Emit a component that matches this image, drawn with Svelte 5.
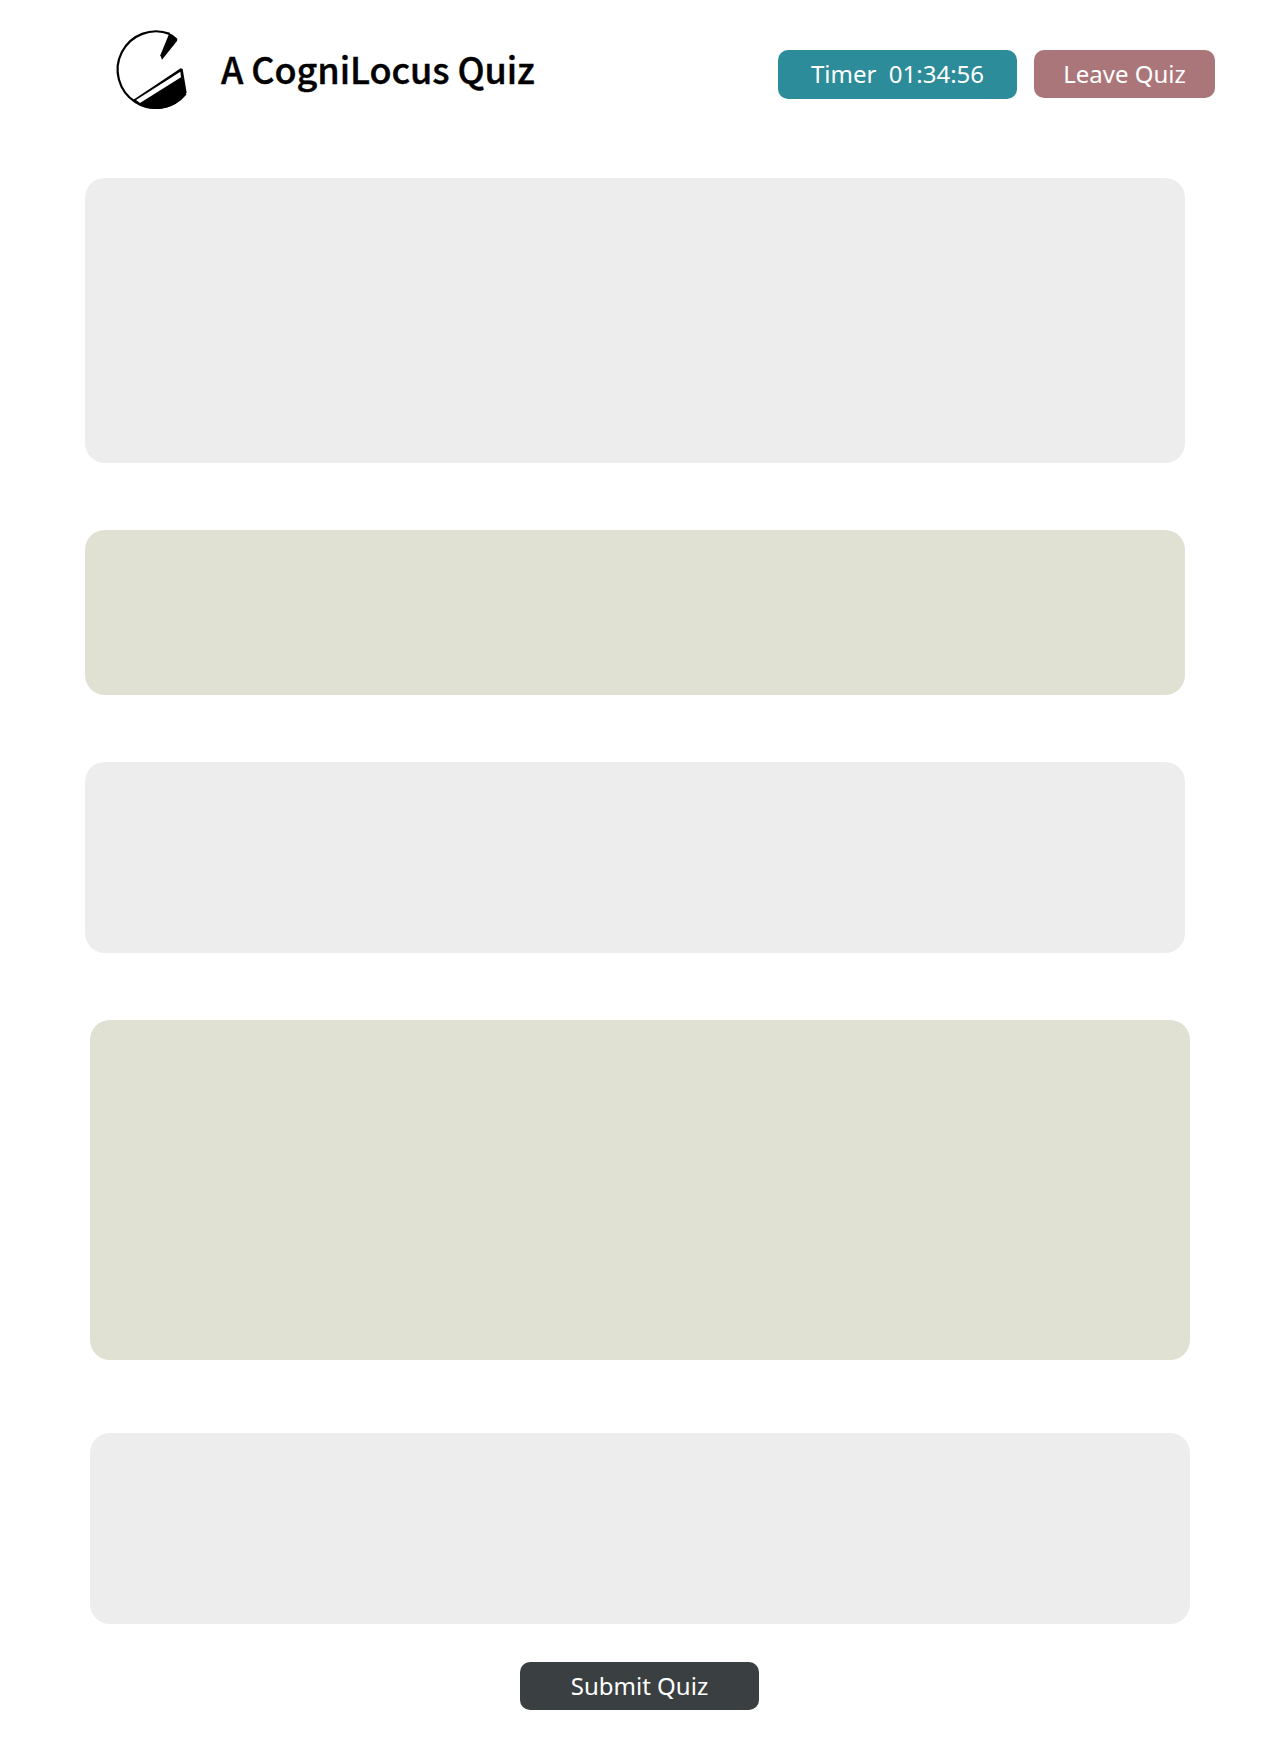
<script>
  const panels = [
    { tone: 'gray', size: 'intro' },
    { tone: 'olive', size: 'short' },
    { tone: 'gray', size: 'medium' },
    { tone: 'olive', size: 'tall', shifted: true },
    { tone: 'gray', size: 'medium', shifted: true }
  ];
</script>

<div class="page">
  <header>
    <div class="brand">
      <svg class="logo" viewBox="0 0 330 300" aria-label="CogniLocus">
        <path d="M209 41.600A115 115 0 1 0 257 221.600" fill="none" stroke="#000" stroke-width="6.500" />
        <path d="M208 40Q222 45 232 56L231 63L186 119L181 106Z" />
        <path d="M242 145L248 147L260 218Q225 267 168 267Q130 266 99 240ZM241 155L108 240L120 249L243 172Z" fill-rule="evenodd" />
      </svg>
      <h1>A CogniLocus Quiz</h1>
    </div>
    <div class="actions">
      <div class="button timer"><span>Timer&nbsp; 01:34:56</span></div>
      <button class="button leave"><span>Leave Quiz</span></button>
    </div>
  </header>
  <main>
    {#each panels as panel}
      <section class="panel {panel.tone} {panel.size}" class:shifted={panel.shifted}></section>
    {/each}
  </main>
  <footer>
    <button class="button submit"><span>Submit Quiz</span></button>
  </footer>
</div>

<style>
  :global(body) {
    margin: 0;
    background: #fff;
  }
  .page {
    width: 1280px;
    height: 1750px;
    box-sizing: border-box;
    overflow: hidden;
    font-family: "Noto Sans", sans-serif;
  }
  header {
    height: 178px;
    box-sizing: border-box;
    padding: 20px 65px 0 100px;
    display: flex;
    justify-content: space-between;
    align-items: flex-start;
  }
  .brand {
    display: flex;
    align-items: flex-start;
  }
  .logo {
    width: 110px;
    height: 100px;
    flex: none;
  }
  h1 {
    margin: 22px 0 0 11px;
    font: 500 36px/52px "Noto Sans CJK JP", sans-serif;
    letter-spacing: -0.08px;
    -webkit-text-stroke: 0.4px #000;
    white-space: nowrap;
    color: #000;
  }
  .actions {
    display: flex;
    gap: 17px;
    padding-top: 30px;
  }
  .button {
    height: 48px;
    box-sizing: border-box;
    padding: 0;
    border: 0;
    border-radius: 10px;
    display: flex;
    justify-content: center;
    align-items: center;
    color: #fff;
    font: 400 24px/32px "Noto Sans", sans-serif;
    white-space: nowrap;
  }
  .timer {
    width: 239px;
    height: 49px;
    padding-bottom: 1px;
    background: #2d8c99;
  }
  .leave {
    width: 181px;
    background: #aa767a;
  }
  .submit {
    width: 239px;
    background: #3a3f41;
  }
  main {
    display: flex;
    flex-direction: column;
    gap: 67px;
    padding-left: 85px;
  }
  .panel {
    width: 1100px;
    border-radius: 20px;
  }
  .gray { background: #ededed; }
  .olive { background: #e0e1d3; }
  .intro { height: 285px; }
  .short { height: 165px; }
  .medium { height: 191px; }
  .tall { height: 340px; margin-bottom: 6px; }
  .shifted { margin-left: 5px; }
  footer {
    padding: 38px 0 0 520px;
  }
</style>
